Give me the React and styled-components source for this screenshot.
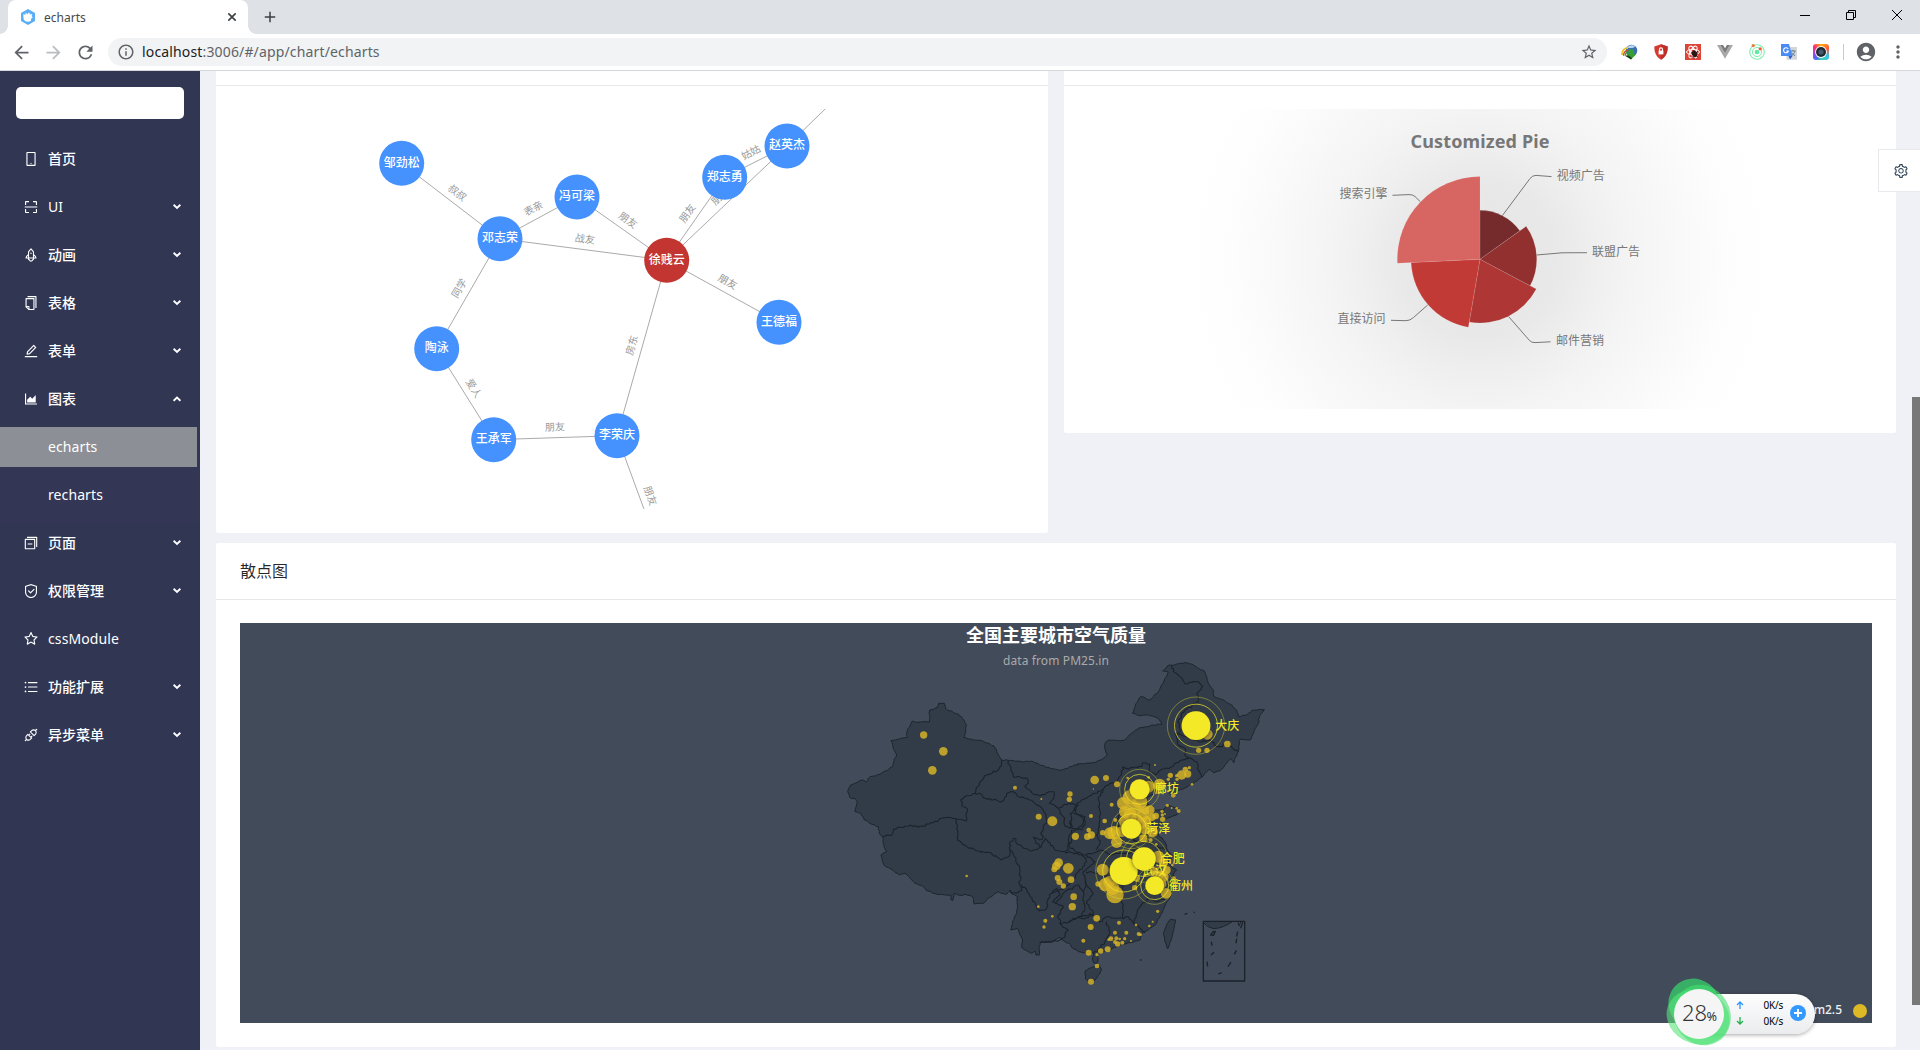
import React from "react";
import styled, { createGlobalStyle, css } from "styled-components";
import {
  MdArrowBack,
  MdArrowForward,
  MdRefresh,
  MdInfoOutline,
  MdStarBorder,
  MdAccountCircle,
  MdMoreVert,
  MdAdd,
} from "react-icons/md";
import {
  AiOutlineMobile,
  AiOutlineScan,
  AiOutlineRocket,
  AiOutlineCopy,
  AiOutlineEdit,
  AiOutlineAreaChart,
  AiOutlineSwitcher,
  AiOutlineSafety,
  AiOutlineStar,
  AiOutlineBars,
  AiOutlineApi,
  AiOutlineSetting,
} from "react-icons/ai";

const FONT = '"Noto Sans", "Noto Sans CJK SC", sans-serif';

const GlobalStyle = createGlobalStyle`
  * { box-sizing: border-box; }
  body { margin: 0; font-family: ${FONT}; font-size: 14px; overflow: hidden; }
  svg { display: block; flex: none; }
  svg text { font-family: ${FONT}; }
`;

/* ---------- browser window ---------- */

const Window = styled.div`
  position: relative;
  display: flex;
  flex-direction: column;
  width: 1920px;
  height: 1050px;
  overflow: hidden;
  background: #f0f1f6;
`;

const TabStrip = styled.div`
  display: flex;
  height: 34px;
  padding-left: 8px;
  background: #dee1e6;
`;

const Tab = styled.div`
  position: relative;
  display: flex;
  align-items: center;
  width: 240px;
  padding: 0 12px;
  border-radius: 8px 8px 0 0;
  background: #fff;
  color: #45494d;
  font-size: 12px;
  &::before,
  &::after {
    content: "";
    position: absolute;
    bottom: 0;
    width: 8px;
    height: 8px;
  }
  &::before {
    left: -8px;
    background: radial-gradient(circle at 0 0, transparent 7.5px, #fff 8px);
  }
  &::after {
    right: -8px;
    background: radial-gradient(circle at 100% 0, transparent 7.5px, #fff 8px);
  }
`;

const TabTitle = styled.span`
  flex: 1;
  margin-left: 8px;
  line-height: 35px;
`;

const NewTab = styled.div`
  display: flex;
  align-items: center;
  margin-left: 13px;
  color: #3c4043;
`;

const WindowButtons = styled.div`
  display: flex;
  margin-left: auto;
`;

const WindowButton = styled.div`
  display: flex;
  align-items: center;
  justify-content: center;
  width: 46px;
  height: 29px;
`;

const Toolbar = styled.div`
  display: flex;
  align-items: center;
  height: 37px;
  padding: 0 6px 0 5px;
  border-bottom: 1px solid #d5d7da;
  background: #fff;
`;

const ToolButton = styled.div`
  display: flex;
  align-items: center;
  justify-content: center;
  width: 32px;
  color: ${(p) => (p.$dim ? "#babcbe" : "#5f6368")};
`;

const Omnibox = styled.div`
  display: flex;
  flex: 1;
  align-items: center;
  height: 28px;
  margin: 0 6px 0 7px;
  padding: 0 9px;
  border-radius: 14px;
  background: #f1f3f4;
  color: #5f6368;
`;

const Url = styled.span`
  flex: 1;
  margin-left: 7px;
  font-size: 14px;
  line-height: 28px;
  letter-spacing: 0.15px;
  b {
    color: #202124;
    font-weight: 400;
  }
`;

const Divider = styled.i`
  width: 1px;
  height: 16px;
  margin: 0 6px;
  background: #c8cacd;
`;

/* ---------- application shell ---------- */

const Shell = styled.div`
  display: grid;
  grid-template-columns: 200px 1fr 8px;
  flex: 1;
  min-height: 0;
`;

const Sider = styled.aside`
  padding-top: 16px;
  background: #313653;
  color: #fff;
`;

const SearchBox = styled.div`
  height: 32px;
  margin: 0 16px 16px;
  border-radius: 5px;
  background: #fff;
`;

const Menu = styled.nav`
  display: flex;
  flex-direction: column;
  padding-top: 4px;
`;

const SubMenu = styled.div`
  display: flex;
  flex-direction: column;
  background: #333755;
`;

const MenuItem = styled.div`
  display: flex;
  align-items: center;
  height: 40px;
  margin: 0 3px 8px 0;
  padding: 0 16px 0 ${(p) => (p.$child ? 48 : 23)}px;
  line-height: 40px;
  font-size: 14px;
  ${(p) =>
    p.$active &&
    css`
      background: #8c8f95;
    `}
`;

const MenuLabel = styled.span`
  flex: 1;
  margin-left: ${(p) => (p.$child ? 0 : 9)}px;
  font-weight: ${(p) => (p.$latin ? 400 : 500)};
  letter-spacing: ${(p) => (p.$latin ? "0.1px" : "normal")};
`;

const Main = styled.main`
  display: flex;
  flex-direction: column;
  gap: 10px;
  min-width: 0;
  padding: 0 16px;
  overflow: hidden;
`;

const Columns = styled.div`
  display: grid;
  grid-template-columns: 1fr 1fr;
  gap: 16px;
  align-items: start;
`;

const Card = styled.section`
  border-radius: ${(p) => (p.$cut ? "0 0 2px 2px" : "2px")};
  background: #fff;
`;

const CardHead = styled.header`
  height: ${(p) => p.$height}px;
  padding: 0 24px;
  border-bottom: 1px solid #e8e8e8;
  color: rgba(0, 0, 0, 0.85);
  font-size: 16px;
  line-height: ${(p) => p.$height}px;
`;

const CardBody = styled.div`
  padding: 23px 24px 24px;
`;

const ScrollTrack = styled.div`
  padding-top: 326px;
`;

const ScrollThumb = styled.div`
  height: 608px;
  background: #787878;
`;

const SettingsHandle = styled.div`
  position: absolute;
  top: 149px;
  right: 0;
  display: flex;
  align-items: center;
  width: 42px;
  height: 43px;
  padding-left: 14px;
  border: 1px solid #e8e9ec;
  border-right: 0;
  background: #fff;
  color: #314659;
`;

/* ---------- network speed widget ---------- */

const SpeedWidget = styled.div`
  position: absolute;
  left: 1664px;
  top: 976px;
  display: flex;
  align-items: center;
  width: 152px;
  height: 74px;
`;

const SpeedPill = styled.div`
  display: flex;
  align-items: center;
  width: 125px;
  height: 40px;
  margin: 2px 0 0 26px;
  padding: 0 9px 2px 46px;
  border-radius: 20px;
  background: linear-gradient(#fdfdfe, #ebecee);
  box-shadow: 0 1px 4px rgba(0, 0, 0, 0.35);
`;

const SpeedRows = styled.div`
  display: flex;
  flex: 1;
  flex-direction: column;
`;

const SpeedRow = styled.div`
  display: flex;
  align-items: center;
  justify-content: space-between;
  height: 16px;
  padding-right: 7px;
  color: #000;
  font-size: 10px;
  line-height: 16px;
  letter-spacing: -0.2px;
`;

const SpeedGauge = styled.svg`
  position: absolute;
  left: 0;
  top: 0;
`;

/* ---------- menu data ---------- */

const MENU = [
  { label: "首页", icon: AiOutlineMobile },
  { label: "UI", icon: AiOutlineScan, arrow: "down", latin: true },
  { label: "动画", icon: AiOutlineRocket, arrow: "down" },
  { label: "表格", icon: AiOutlineCopy, arrow: "down" },
  { label: "表单", icon: AiOutlineEdit, arrow: "down" },
  {
    label: "图表",
    icon: AiOutlineAreaChart,
    arrow: "up",
    children: [{ label: "echarts", active: true }, { label: "recharts" }],
  },
  { label: "页面", icon: AiOutlineSwitcher, arrow: "down" },
  { label: "权限管理", icon: AiOutlineSafety, arrow: "down" },
  { label: "cssModule", icon: AiOutlineStar, latin: true },
  { label: "功能扩展", icon: AiOutlineBars, arrow: "down" },
  { label: "异步菜单", icon: AiOutlineApi, arrow: "down" },
];

function Arrow({ dir }) {
  return (
    <svg width="8" height="6" viewBox="0 0 8 6" fill="none" stroke="#fff" strokeWidth="1.9">
      <path d={dir === "up" ? "M.6 4.8 4 1.6l3.4 3.2" : "M.6.8 4 4l3.4-3.2"} />
    </svg>
  );
}

function SideMenu() {
  return (
    <Menu>
      {MENU.map(({ label, icon: Icon, arrow, latin, children }) => (
        <React.Fragment key={label}>
          <MenuItem>
            <Icon size={16} />
            <MenuLabel $latin={latin}>{label}</MenuLabel>
            {arrow && <Arrow dir={arrow} />}
          </MenuItem>
          {children && (
            <SubMenu>
              {children.map((c) => (
                <MenuItem key={c.label} $child $active={c.active}>
                  <MenuLabel $child $latin>
                    {c.label}
                  </MenuLabel>
                </MenuItem>
              ))}
            </SubMenu>
          )}
        </React.Fragment>
      ))}
    </Menu>
  );
}

/* ---------- toolbar icons ---------- */

function Favicon() {
  return (
    <svg width="16" height="16" viewBox="0 0 16 16">
      <path d="M8 0l7 4v8l-7 4-7-4V4z" fill="#58aef7" />
      <path
        d="M3.400 5l1.900.9.400-2.300 1.700 1.600 1.700-2 .9 2.200 2.300-.7-.6 2.300 1 1.500-1.800 1.500.2 1.700-2.600 1.100-2.700-.2-2-1.800L3.400 8z"
        fill="#fff"
      />
    </svg>
  );
}

function ExtGlobe() {
  return (
    <svg width="17" height="16" viewBox="0 0 17 16">
      <circle cx="10.500" cy="6.500" r="5.800" fill="#3b6fb4" />
      <path d="M5.800 4C7.500.9 12 .4 14 2.400 12.500 4.800 9 3.800 5.800 4z" fill="#bcd6f0" />
      <path d="M1 11C.6 6.500 4 3.400 7 4.300" fill="none" stroke="#e8c22c" strokeWidth="1.800" />
      <path d="M2.500 11.800C2.300 8.500 4.800 6 7.500 6.500" fill="none" stroke="#d0472c" strokeWidth="1.400" />
      <path d="M4.200 11.300c0-1.800 1.300-3.400 3.300-3.200" fill="none" stroke="#3c9a3a" strokeWidth="1.500" />
      <path d="M7.500 6q3-1.500 5.500.5V10h2.500L10 15.500 5.500 10.800l2-.8z" fill="#37a02f" />
      <path d="M3.500 11.500H8l3 2.700-1 1.300z" fill="#1c3f1b" />
    </svg>
  );
}

function ExtShield() {
  return (
    <svg width="14" height="16" viewBox="0 0 14 16">
      <path d="M7 .3l6.700 2.200c0 6-1.700 10.200-6.700 13.200C2 12.700.3 8.500.3 2.500z" fill="#d33b30" />
      <path d="M7 .3l6.700 2.200c0 6-1.700 10.200-6.700 13.200z" fill="#bf2f27" />
      <rect x="4.600" y="6.600" width="4.800" height="3.800" fill="#fff" />
      <path d="M5.500 7V5.400a1.500 1.500 0 013 0V7" fill="none" stroke="#fff" strokeWidth="1.100" />
    </svg>
  );
}

function ExtReact() {
  return (
    <svg width="16" height="16" viewBox="0 0 16 16">
      <rect width="16" height="16" fill="#dc4437" />
      <g fill="none" stroke="#fff" strokeWidth="1">
        <ellipse cx="8" cy="8" rx="6.500" ry="2.600" />
        <ellipse cx="8" cy="8" rx="6.500" ry="2.600" transform="rotate(60 8 8)" />
        <ellipse cx="8" cy="8" rx="6.500" ry="2.600" transform="rotate(120 8 8)" />
      </g>
      <ellipse cx="9.500" cy="9.800" rx="2.700" ry="3.200" fill="#2a1715" transform="rotate(-35 9.500 9.800)" />
      <path d="M6 8l7 5M13 7l-6 6.500M9 6v8.500" stroke="#2a1715" strokeWidth=".8" />
      <circle cx="5.500" cy="7.500" r="1.200" fill="#fff" />
    </svg>
  );
}

function ExtVue() {
  return (
    <svg width="16" height="14" viewBox="0 0 16 14">
      <path d="M0 0h3.200L8 8.300 12.800 0H16L8 13.800z" fill="#a8a8a8" />
      <path d="M3.200 0h2.900L8 3.200 9.900 0h2.900L8 8.300z" fill="#7a7a7a" />
    </svg>
  );
}

function ExtOrbit() {
  return (
    <svg width="16" height="16" viewBox="0 0 16 16">
      <circle cx="8" cy="8" r="7.300" fill="none" stroke="#7df0ae" strokeWidth="1.100" />
      <circle cx="8" cy="8" r="4.600" fill="none" stroke="#7df0ae" strokeWidth="1" />
      <circle cx="8" cy="8" r="2.300" fill="#5fe8a0" />
      <circle cx="4.200" cy="1.600" r="1.600" fill="#f4743b" />
      <circle cx="11.200" cy="4.800" r="1.600" fill="#f4552b" />
    </svg>
  );
}

function ExtTranslate() {
  return (
    <svg width="16" height="16" viewBox="0 0 16 16">
      <rect x="5.500" y="3" width="10.500" height="12.700" fill="#d4d6d9" />
      <path
        d="M9.500 7h5M12 5.800V7m2 0c-.5 2.200-2 3.800-3.800 4.600M10.500 8.500c.8 1.500 2 2.600 3.500 3.200"
        fill="none"
        stroke="#5f7f95"
      />
      <path d="M0 0h8l3.500 12H0z" fill="#4b8bf5" />
      <path d="M7.500 12h4L9 15.500z" fill="#2f5fc4" />
      <path d="M7.200 5.100A2.500 2.500 0 107.400 7H5.300" fill="none" stroke="#fff" strokeWidth="1.100" />
    </svg>
  );
}

const CameraRing = styled.span`
  display: flex;
  align-items: center;
  justify-content: center;
  width: 16px;
  height: 16px;
  border-radius: 3px;
  background: conic-gradient(#ffb400, #ff5a3c, #35c8e8 35%, #3fd0b0 50%, #4a6cf0 60%, #b23ce0 72%, #ff2a7a 85%, #ffb400);
`;

function ExtCamera() {
  return (
    <CameraRing>
      <svg width="14" height="14" viewBox="0 0 14 14">
        <circle cx="7" cy="7" r="5.900" fill="#fff" />
        <circle cx="7" cy="7" r="5" fill="#1e2a33" />
        <circle cx="7" cy="7" r="2.600" fill="#46596a" />
      </svg>
    </CameraRing>
  );
}

const EXTENSIONS = [ExtGlobe, ExtShield, ExtReact, ExtVue, ExtOrbit, ExtTranslate, ExtCamera];

function Browser() {
  return (
    <>
      <TabStrip>
        <Tab>
          <Favicon />
          <TabTitle>echarts</TabTitle>
          <svg width="8" height="8" viewBox="0 0 8 8" stroke="#3c4043" strokeWidth="1.600">
            <path d="M.3.3l7.400 7.400M7.700.3L.3 7.700" />
          </svg>
        </Tab>
        <NewTab>
          <MdAdd size={18} />
        </NewTab>
        <WindowButtons>
          <WindowButton>
            <svg width="10" height="10" viewBox="0 0 10 10">
              <path d="M0 5.500h10" stroke="#000" />
            </svg>
          </WindowButton>
          <WindowButton>
            <svg width="10" height="10" viewBox="0 0 10 10" fill="none" stroke="#000">
              <path d="M.5 2.500h7v7h-7zM2.500 2.500v-2h7v7h-2" />
            </svg>
          </WindowButton>
          <WindowButton>
            <svg width="10" height="10" viewBox="0 0 10 10" stroke="#000">
              <path d="M0 0l10 10M10 0L0 10" />
            </svg>
          </WindowButton>
        </WindowButtons>
      </TabStrip>
      <Toolbar>
        <ToolButton>
          <MdArrowBack size={21} />
        </ToolButton>
        <ToolButton $dim>
          <MdArrowForward size={21} />
        </ToolButton>
        <ToolButton>
          <MdRefresh size={21} />
        </ToolButton>
        <Omnibox>
          <MdInfoOutline size={18} />
          <Url>
            <b>localhost</b>:3006/#/app/chart/echarts
          </Url>
          <MdStarBorder size={18} />
        </Omnibox>
        {EXTENSIONS.map((Ext, i) => (
          <ToolButton key={i}>
            <Ext />
          </ToolButton>
        ))}
        <Divider />
        <ToolButton>
          <MdAccountCircle size={22} />
        </ToolButton>
        <ToolButton>
          <MdMoreVert size={20} />
        </ToolButton>
      </Toolbar>
    </>
  );
}

/* ---------- relationship graph ---------- */

const PEOPLE = {
  zou: ["邹劲松", 401.7, 163.3],
  deng: ["邓志荣", 500, 238.7],
  feng: ["冯可梁", 577, 197],
  xu: ["徐贱云", 666.7, 260.3],
  zheng: ["郑志勇", 724.7, 177.3],
  zhao: ["赵英杰", 787, 146],
  wang: ["王德福", 779, 322.3],
  li: ["李荣庆", 617, 435.7],
  jun: ["王承军", 493.7, 439.7],
  tao: ["陶泳", 436.7, 348.7],
  north: ["", 850, 85],
  south: ["", 655, 539],
};

const RELATIONS = [
  ["zou", "deng", "叔叔", 457.3, 192.7],
  ["deng", "feng", "表亲", 533.3, 208.3],
  ["deng", "xu", "战友", 585, 239],
  ["feng", "xu", "朋友", 628, 220],
  ["zheng", "zhao", "姑姑", 751, 152.3],
  ["xu", "zheng", "朋友", 687.2, 213.3],
  ["xu", "zhao", "朋友", 720, 196.3],
  ["xu", "wang", "朋友", 727.7, 281.7],
  ["xu", "li", "房东", 631.7, 345.3],
  ["deng", "tao", "同学", 459, 288.3],
  ["tao", "jun", "爱人", 473.7, 388.3],
  ["jun", "li", "朋友", 555, 427],
  ["li", "south", "朋友", 650.3, 495.7],
  ["zhao", "north", "", 0, 0],
];

function RelationGraph() {
  return (
    <svg width="784" height="400" viewBox="240 109 784 400">
      {RELATIONS.map(([a, b, label, lx, ly], i) => {
        const [, x1, y1] = PEOPLE[a];
        const [, x2, y2] = PEOPLE[b];
        let angle = (Math.atan2(y2 - y1, x2 - x1) * 180) / Math.PI;
        if (angle > 90) angle -= 180;
        if (angle < -90) angle += 180;
        return (
          <g key={i}>
            <line x1={x1} y1={y1} x2={x2} y2={y2} stroke="#aaa" />
            {label && (
              <text
                transform={`translate(${lx} ${ly}) rotate(${angle})`}
                y="3.600"
                textAnchor="middle"
                fontSize="10"
                fill="#999"
              >
                {label}
              </text>
            )}
          </g>
        );
      })}
      {Object.entries(PEOPLE).map(
        ([id, [name, x, y]]) =>
          name && (
            <g key={id}>
              <circle cx={x} cy={y} r="22.500" fill={id === "xu" ? "#c23531" : "#4592ff"} />
              <text x={x} y={y + 3.3} textAnchor="middle" fontSize="12" fontWeight="500" fill="#fff">
                {name}
              </text>
            </g>
          )
      )}
    </svg>
  );
}

/* ---------- rose pie ---------- */

const SLICES = [
  { value: 235, r: 49, color: "#752b2b" },
  { value: 274, r: 56.7, color: "#91302f" },
  { value: 310, r: 63.7, color: "#ae3635" },
  { value: 335, r: 69, color: "#c23a36" },
  { value: 400, r: 82.7, color: "#d76662" },
];

const PIE_LABELS = [
  ["视频广告", 1580.7, 179.8, "M1502.300 215.700 1530 178.500Q1532.500 175.300 1536 175.400L1551.500 176.600"],
  ["联盟广告", 1616, 256, "M1536.700 255 1562 252.800 1587 252.700"],
  ["邮件营销", 1580, 345.3, "M1508.700 316.700 1529.500 340.500Q1531.500 342.700 1535 342.600L1550.500 341.800"],
  ["直接访问", 1361.5, 323, "M1427.700 305 1413.500 317.500Q1410 320.700 1406 320.700L1391 320.300"],
  ["搜索引擎", 1363.5, 198, "M1420.300 201.700 1415 196.500Q1413 194.600 1409 194.600L1392.500 195.300"],
];

function RosePie() {
  const cx = 1480;
  const cy = 259.3;
  const total = SLICES.reduce((s, d) => s + d.value, 0);
  let acc = 0;
  const at = (turn, r) => {
    const a = turn * Math.PI * 2;
    return `${cx + r * Math.sin(a)} ${cy - r * Math.cos(a)}`;
  };
  return (
    <svg width="784" height="300" viewBox="1088 109 784 300">
      <defs>
        <radialGradient id="halo" gradientUnits="userSpaceOnUse" cx={cx} cy={cy} r="290">
          <stop offset="0" stopColor="#e4e4e4" />
          <stop offset="0.28" stopColor="#e9e9e9" />
          <stop offset="0.4" stopColor="#efefef" />
          <stop offset="0.52" stopColor="#f4f4f4" />
          <stop offset="0.7" stopColor="#f9f9f9" />
          <stop offset="0.85" stopColor="#fdfdfd" />
          <stop offset="1" stopColor="#fff" />
        </radialGradient>
      </defs>
      <rect x="1088" y="109" width="784" height="300" fill="url(#halo)" />
      {SLICES.map((d) => {
        const from = acc / total;
        acc += d.value;
        const to = acc / total;
        return (
          <path
            key={d.value}
            d={`M${cx} ${cy}L${at(from, d.r)}A${d.r} ${d.r} 0 0 1 ${at(to, d.r)}Z`}
            fill={d.color}
            stroke="#fff"
            strokeOpacity="0.2"
            strokeWidth="0.500"
          />
        );
      })}
      <text x={cx} y="147.500" textAnchor="middle" fontSize="18" fontWeight="700" fill="#777" textLength="139">
        Customized Pie
      </text>
      {PIE_LABELS.map(([label, x, y, line]) => (
        <g key={label}>
          <path d={line} fill="none" stroke="#777" />
          <text x={x} y={y} textAnchor="middle" fontSize="12" fill="#777">
            {label}
          </text>
        </g>
      ))}
    </svg>
  );
}

/* ---------- air quality map ---------- */

// Each segment is [dx, dy, x, y, x, y, ...] in units of a third of a pixel.
const toPoints = (...segments) =>
  segments.flatMap(([dx, dy, ...c]) => {
    const pts = [];
    for (let i = 0; i < c.length; i += 2) pts.push([c[i] + dx, c[i + 1] + dy]);
    return pts;
  });

// Breaks long straight runs into short uneven steps, as a surveyed border has.
function roughen(points, closed, amount) {
  let seed = 7;
  const rnd = () => {
    seed = (seed * 16807) % 2147483647;
    return seed / 2147483647 - 0.5;
  };
  const list = closed ? [...points, points[0]] : points;
  let d = `M${list[0].join(" ")}`;
  for (let i = 1; i < list.length; i++) {
    const [x0, y0] = list[i - 1];
    const [x1, y1] = list[i];
    const steps = Math.max(1, Math.round(Math.hypot(x1 - x0, y1 - y0) / 7));
    for (let s = 1; s <= steps; s++) {
      const t = s / steps;
      const k = s === steps ? 0 : amount;
      d += `L${(x0 + (x1 - x0) * t + rnd() * k).toFixed(1)} ${(y0 + (y1 - y0) * t + rnd() * k).toFixed(1)}`;
    }
  }
  return closed ? d + "Z" : d;
}

const MAINLAND = toPoints(
  [0, 0, 53, 515, 62, 495, 95, 480, 108, 486, 120, 470, 150, 463, 188, 440, 192, 418, 200, 405, 190, 385, 183, 362, 232, 352, 231, 335, 247, 303, 262, 307, 298, 306, 299, 270, 322, 262, 326, 250, 343, 250, 347, 265, 370, 278, 385, 282, 402, 300, 409, 318, 402, 352, 430, 360, 456, 362, 492, 378, 500, 395, 515, 420, 535, 421, 570, 424, 610, 425, 630, 436, 655, 442, 690, 451, 720, 440, 745, 432],
  [720, 60, 20, 374, 45, 370, 75, 368, 100, 355, 112, 345, 104, 325, 106, 308, 118, 300, 140, 302, 165, 300, 185, 280, 205, 265, 250, 255, 275, 253, 265, 235, 235, 225, 205, 226, 188, 220, 195, 200, 212, 170, 240, 180, 265, 155, 285, 115, 295, 97, 278, 93, 292, 78, 320, 72, 345, 68, 365, 72, 385, 85, 405, 95, 415, 130, 430, 150, 432, 170, 455, 178, 475, 190, 500, 210, 505, 230, 530, 225, 545, 212, 583, 208, 570, 225, 565, 250, 545, 290, 540, 300, 510, 298, 505, 335, 497, 352, 492, 368, 482, 355, 470, 370, 455, 388, 430, 398, 418, 388, 395, 412],
  [600, 420, 515, 52, 490, 70, 440, 95, 425, 108, 418, 100, 430, 80, 405, 75, 385, 90, 365, 105, 352, 115, 352, 130, 375, 150, 400, 150, 415, 135, 450, 150, 440, 165, 420, 172, 400, 182, 382, 205, 385, 225, 405, 245, 412, 270, 430, 290, 415, 305, 425, 320, 440, 330, 430, 345, 440, 360, 437, 375, 425, 400, 408, 430, 395, 460, 380, 490, 355, 510, 335, 520, 330, 540, 300, 548, 265, 558, 235, 572, 210, 578, 202, 587, 204, 602, 200, 612, 190, 608, 187, 595, 192, 578, 165, 578, 145, 575, 130, 566, 118, 550],
  [510, 360, 195, 605, 180, 592, 155, 605, 120, 606, 118, 645, 108, 645, 105, 633, 95, 640, 80, 632, 65, 622, 68, 600, 60, 585, 52, 565, 32, 570, 37, 545, 50, 520, 53, 470],
  [0, 0, 545, 822, 540, 810, 530, 823, 505, 815, 475, 835, 460, 850, 432, 852, 428, 830, 405, 823, 388, 826, 372, 820, 368, 842, 362, 838, 362, 825, 320, 823, 290, 812, 280, 800, 250, 785, 225, 760, 208, 765, 180, 745, 162, 735, 153, 705, 170, 695, 162, 680, 158, 652, 148, 640, 145, 620, 120, 610, 103, 600, 92, 580, 75, 575, 82, 545, 75, 535, 60, 533]
);

const PROVINCES = [
  [0, 0, 158, 652, 165, 648, 185, 645, 190, 628, 240, 615, 265, 622, 310, 608, 335, 595, 355, 592, 380, 597, 408, 603, 413, 572, 400, 560, 392, 540, 435, 520, 450, 485, 470, 465, 505, 450, 515, 420],
  [0, 0, 435, 520, 450, 520, 465, 535, 515, 545, 530, 520, 550, 515, 565, 530, 585, 535, 600, 540, 615, 550, 640, 570, 650, 600, 640, 625, 632, 640, 640, 650, 628, 660, 610, 652, 618, 670, 635, 680, 600, 692, 570, 675, 550, 655, 540, 665, 540, 690],
  [0, 0, 380, 597, 383, 660, 410, 680, 440, 692, 485, 702, 515, 720, 540, 705, 540, 690, 558, 715, 570, 755, 570, 795, 575, 812, 555, 818, 540, 812],
  [0, 0, 535, 421, 550, 470, 592, 475, 595, 490, 585, 500, 610, 522, 630, 528, 650, 518, 672, 515, 672, 530, 658, 550, 685, 565, 700, 590, 702, 610, 720, 625, 725, 600, 720, 580, 730, 575, 745, 555, 715, 550, 685, 565],
  [0, 0, 725, 600, 725, 625, 755, 630, 765, 605, 755, 590, 730, 580],
  [0, 0, 635, 680, 645, 655, 675, 690, 705, 695, 715, 690, 715, 670, 725, 665, 725, 630],
  [0, 0, 705, 695, 740, 700, 760, 710, 770, 725, 740, 760, 730, 780, 715, 795, 700, 808, 665, 820],
  [0, 0, 575, 795, 590, 808, 600, 830, 620, 860, 628, 872, 650, 865, 655, 835, 665, 820, 680, 805, 690, 825, 668, 845, 700, 860, 685, 885, 690, 910, 715, 930, 705, 950, 690, 960, 650, 965, 632, 968],
  [0, 0, 690, 910, 715, 908, 730, 895, 765, 895, 790, 880, 770, 850, 790, 820, 765, 790],
  [510, 360, 225, 200, 245, 180, 285, 160, 308, 148, 295, 180, 300, 215, 298, 260, 290, 285, 300, 310, 290, 330],
  [510, 360, 308, 148, 330, 130, 350, 125, 365, 100, 368, 80, 385, 88, 400, 82, 425, 80, 430, 68, 450, 72, 448, 95, 465, 105, 478, 92, 520, 78, 545, 60, 565, 50],
  [510, 360, 225, 200, 228, 220, 255, 230, 245, 258, 215, 272, 205, 300, 210, 325, 250, 345, 280, 340, 300, 330, 335, 345, 375, 340, 410, 330, 400, 300, 440, 305, 470, 315, 495, 330],
  [510, 360, 260, 345, 285, 365, 262, 385, 250, 395, 258, 440, 250, 455, 235, 435, 195, 455, 165, 490],
  [510, 360, 258, 395, 300, 400, 340, 420, 370, 440, 362, 475, 370, 510, 368, 535, 345, 535, 320, 530, 300, 545, 270, 520, 245, 530, 205, 545],
  [510, 360, 245, 530, 255, 505, 248, 480, 250, 455],
  [510, 360, 320, 545, 330, 575, 315, 605, 280, 640],
  [510, 360, 368, 535, 385, 530, 400, 550, 435, 578],
  [510, 360, 404, 550, 412, 510, 430, 488, 450, 475, 470, 485, 495, 478],
  [510, 360, 370, 200, 350, 240, 360, 280, 400, 300, 430, 270, 450, 300],
  [720, 60, 350, 350, 380, 365, 385, 390, 395, 412],
  [720, 60, 350, 350, 345, 325, 325, 315, 315, 280, 330, 275, 325, 240, 345, 210, 385, 185, 380, 160, 398, 140, 385, 125, 345, 132, 330, 110, 310, 95, 305, 77],
  [720, 60, 315, 280, 350, 290, 385, 305, 420, 300, 440, 320, 470, 315, 505, 335],
];

const HAINAN = toPoints([510, 360, 256, 692, 280, 680, 298, 676, 305, 688, 292, 712, 272, 730, 256, 716]);
const TAIWAN = toPoints([600, 420, 422, 477, 437, 480, 425, 535, 413, 567, 405, 545, 400, 520, 412, 490]);

// Each city is x, y, radius.
const CITIES = [
  [0, 0, [281, 345, 11, 340, 394, 13, 307, 451, 13, 555, 503, 6, 634, 537, 3, 626, 590, 9, 667, 604, 15, 720, 522, 8, 718, 538, 8, 736, 649, 11, 410, 768, 4, 686, 728, 13, 679, 738, 13, 673, 748, 9, 715, 745, 16, 683, 774, 9, 688, 786, 9, 700, 798, 8, 723, 779, 10, 731, 830, 10, 727, 860, 11, 625, 860, 4, 667, 889, 4, 646, 902, 6, 642, 921, 5, 760, 962, 6]],
  [720, 60, [412, 283, 16, 472, 312, 10, 386, 331, 8, 411, 331, 8, 255, 375, 3, 358, 383, 5, 346, 388, 8, 353, 402, 11, 335, 405, 14, 320, 407, 5, 321, 418, 5, 301, 406, 8, 295, 418, 5, 74, 420, 13, 108, 414, 9, 141, 433, 9, 236, 412, 4, 173, 414, 4, 269, 434, 18, 366, 433, 4, 310, 466, 7, 70, 447, 2]],
  [600, 420, [183, 168, 6, 245, 134, 6, 224, 183, 7, 256, 180, 6, 176, 210, 7, 172, 230, 10, 184, 225, 11, 218, 218, 8, 280, 130, 19, 285, 155, 18, 300, 112, 22, 315, 145, 20, 330, 125, 22, 355, 80, 18, 285, 185, 18, 320, 180, 18, 300, 165, 20, 345, 150, 12, 335, 190, 16, 240, 220, 18, 252, 218, 20, 260, 247, 17, 275, 215, 16, 340, 165, 18, 360, 150, 14, 366, 172, 11, 377, 168, 10, 350, 182, 14, 345, 208, 16, 412, 136, 5, 425, 144, 3, 440, 145, 4, 446, 153, 6, 396, 154, 5, 397, 165, 5, 405, 162, 3, 398, 178, 8, 340, 235, 12, 362, 240, 6, 368, 215, 16, 379, 253, 4, 218, 329, 18, 226, 374, 20, 238, 366, 18, 255, 404, 26, 248, 385, 20, 204, 372, 8, 314, 383, 8, 320, 355, 10, 385, 290, 18, 400, 308, 14, 410, 330, 12, 400, 350, 16, 408, 400, 16, 395, 372, 14, 388, 345, 14, 372, 335, 12, 427, 315, 4, 432, 355, 6, 383, 454, 5, 368, 485, 3, 358, 498, 4, 200, 475, 10, 182, 501, 9, 267, 488, 6, 318, 495, 4, 255, 518, 6, 289, 518, 6, 236, 539, 4, 243, 536, 7, 259, 535, 6, 269, 537, 4, 284, 536, 5, 255, 546, 6, 263, 552, 8, 277, 548, 6, 303, 543, 3, 326, 522, 6, 332, 524, 4, 233, 568, 9, 212, 573, 8, 201, 584, 5, 176, 578, 9, 201, 618, 7, 183, 665, 9]],
];

const TOP_CITIES = [
  { name: "大庆", x: 1098, y: 317, r: 43 },
  { name: "武汉", x: 881, y: 753, r: 42 },
  { name: "合肥", x: 942, y: 717, r: 35 },
  { name: "廊坊", x: 929, y: 508, r: 30 },
  { name: "菏泽", x: 904, y: 626, r: 30 },
  { name: "衢州", x: 974, y: 797, r: 28 },
];

const ISLANDS = "M1064 883l8-3M1091 877h4M930 1020h4";
const SEA_DASHES =
  "M1232 925l6-18M1220 950l3-15M1218 970l2-14M1213 1003l6-12M1194 1040l9-14M1165 1062l10-4M1131 1025l2 14M1143 1005l9-8M1144 965l2 12M1142 945l6-9 8-2-6 12z";

function AirMap() {
  return (
    <svg width="1632" height="400" viewBox="240 623 1632 400">
      <defs>
        <filter id="glow" x="-50%" y="-50%" width="200%" height="200%">
          <feDropShadow dx="0" dy="0" stdDeviation="6" floodColor="#333" floodOpacity="0.9" />
        </filter>
      </defs>
      <rect x="240" y="623" width="1632" height="400" fill="#424b59" />
      <g transform="translate(830 620) scale(0.33333)">
        <g fill="#323c48" stroke="#1b222b" strokeWidth="2.800" strokeLinejoin="round">
          <path d={roughen(MAINLAND, true, 3.5)} />
          <path d={roughen(HAINAN, true, 3)} />
          <path d={roughen(TAIWAN, true, 2)} />
          {PROVINCES.map((p, i) => (
            <path key={i} d={roughen(toPoints(p), false, 7)} fill="none" strokeWidth="3.200" />
          ))}
          <path d="M1120 904q12 16 30 21 20 0 35-7l26-14z" stroke="none" />
          <path d="M1120 908q12 14 30 18 30-1 58-22M1223 904l4 14 6-14" fill="none" />
          <path d={ISLANDS + SEA_DASHES} fill="none" strokeWidth="4" />
          <rect x="1120" y="904" width="124" height="179" fill="none" strokeWidth="4" />
        </g>
        <g fill="#ddb926" fillOpacity="0.8">
          {CITIES.flatMap(([dx, dy, c], g) => {
            const dots = [];
            for (let i = 0; i < c.length; i += 3)
              dots.push(<circle key={`${g}-${i}`} cx={c[i] + dx} cy={c[i + 1] + dy} r={c[i + 2]} />);
            return dots;
          })}
        </g>
        {TOP_CITIES.map((c) => (
          <g key={c.name}>
            <g fill="none" stroke="#f4e925" strokeWidth="2.800">
              <circle cx={c.x} cy={c.y} r={c.r * 1.5} opacity="0.75" />
              <circle cx={c.x} cy={c.y} r={c.r * 2} opacity="0.4" />
            </g>
            <text x={c.x + c.r + 15} y={c.y + 12} fontSize="36" fontWeight="500" fill="#f4e925">
              {c.name}
            </text>
            <circle cx={c.x} cy={c.y} r={c.r} fill="#f4e925" filter="url(#glow)" />
          </g>
        ))}
      </g>
      <text x="1056" y="642" textAnchor="middle" fontSize="18" fontWeight="700" fill="#fff">
        全国主要城市空气质量
      </text>
      <text x="1056" y="664.500" textAnchor="middle" fontSize="12" fill="#aaa" textLength="106">
        data from PM25.in
      </text>
      <text x="1842" y="1014" textAnchor="end" fontSize="12" fontWeight="500" fill="#f0f0f0">
        pm2.5
      </text>
      <circle cx="1860" cy="1011" r="7" fill="#ddb926" />
    </svg>
  );
}

/* ---------- floating speed widget ---------- */

function NetSpeed() {
  return (
    <SpeedWidget>
      <SpeedPill>
        <SpeedRows>
          <SpeedRow>
            <svg width="8" height="8" viewBox="0 0 8 8" fill="none" stroke="#2f96fb" strokeWidth="1.300">
              <path d="M4 8V1M1 4l3-3 3 3" />
            </svg>
            0K/s
          </SpeedRow>
          <SpeedRow>
            <svg width="8" height="8" viewBox="0 0 8 8" fill="none" stroke="#22b14c" strokeWidth="1.300">
              <path d="M4 0v7M1 4l3 3 3-3" />
            </svg>
            0K/s
          </SpeedRow>
        </SpeedRows>
        <svg width="16" height="16" viewBox="0 0 16 16">
          <circle cx="8" cy="8" r="8" fill="#3399fe" />
          <path d="M8 4v8M4 8h8" stroke="#fff" strokeWidth="2" />
        </svg>
      </SpeedPill>
      <SpeedGauge width="72" height="74" viewBox="1664 976 72 74">
        <ellipse cx="1694" cy="1004" rx="26" ry="25" fill="#36d86c" opacity="0.7" transform="rotate(40 1694 1004)" />
        <ellipse cx="1698" cy="1017" rx="32" ry="27" fill="#5ce47c" opacity="0.6" transform="rotate(20 1698 1017)" />
        <ellipse cx="1702" cy="1015" rx="28" ry="31" fill="#45e070" opacity="0.6" transform="rotate(-30 1702 1015)" />
        <circle cx="1699" cy="1014" r="25" fill="#f5f5f5" />
        <text x="1682" y="1021" fontSize="22" fontWeight="300" fill="#333" textLength="25">
          28
        </text>
        <text x="1706.500" y="1021" fontSize="12" fill="#333" textLength="10.500" lengthAdjust="spacingAndGlyphs">
          %
        </text>
      </SpeedGauge>
    </SpeedWidget>
  );
}

export default function App() {
  return (
    <Window>
      <GlobalStyle />
      <Browser />
      <Shell>
        <Sider>
          <SearchBox />
          <SideMenu />
        </Sider>
        <Main>
          <Columns>
            <Card $cut>
              <CardHead $height={15} />
              <CardBody>
                <RelationGraph />
              </CardBody>
            </Card>
            <Card $cut>
              <CardHead $height={15} />
              <CardBody>
                <RosePie />
              </CardBody>
            </Card>
          </Columns>
          <Card>
            <CardHead $height={57}>散点图</CardHead>
            <CardBody>
              <AirMap />
            </CardBody>
          </Card>
        </Main>
        <ScrollTrack>
          <ScrollThumb />
        </ScrollTrack>
      </Shell>
      <SettingsHandle>
        <AiOutlineSetting size={16} />
      </SettingsHandle>
      <NetSpeed />
    </Window>
  );
}
